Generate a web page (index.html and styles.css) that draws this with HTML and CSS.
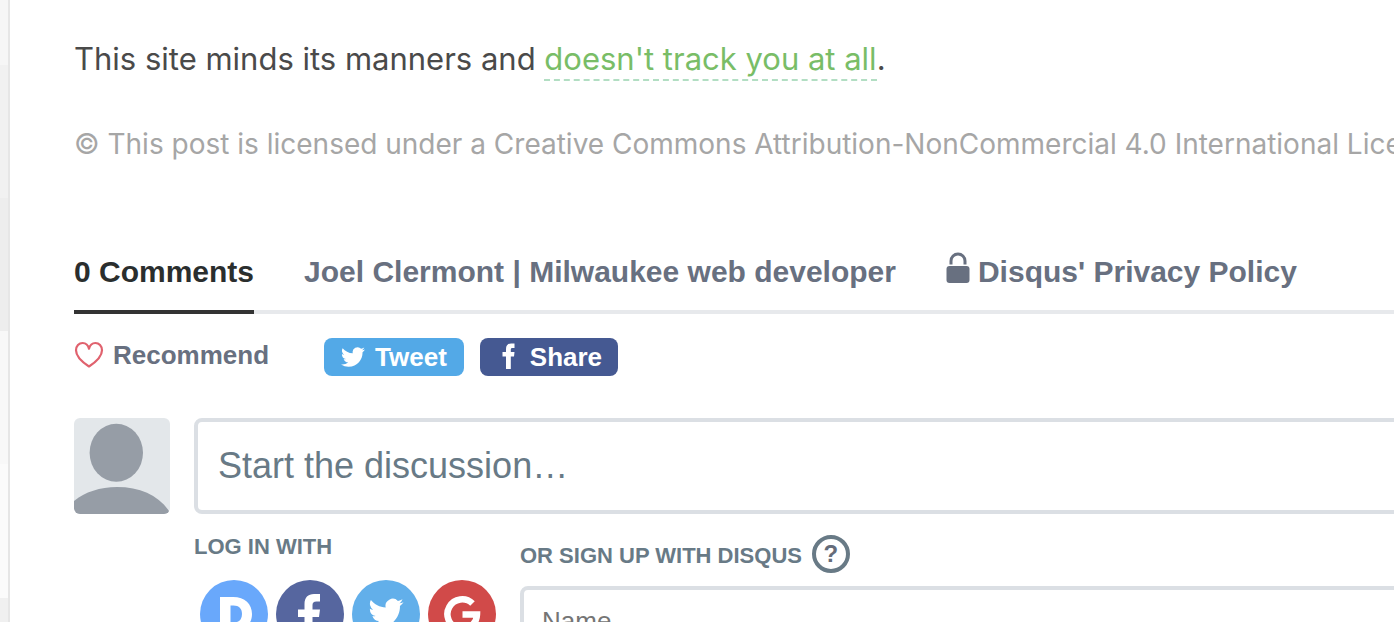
FILE: index.html
```
<!DOCTYPE html>
<html lang="en">
<head>
<meta charset="utf-8">
<title>Comments</title>
<link rel="stylesheet" href="styles.css">
</head>
<body>
<main class="page">
  <p class="note">This site minds its manners and <a class="note-link" href="#">doesn't track you at all</a>.</p>
  <p class="license">© This post is licensed under a Creative Commons Attribution-NonCommercial 4.0 International License</p>

  <section class="thread">
    <nav class="tabs">
      <a class="tab tab-active" href="#">0 Comments</a>
      <a class="tab" href="#">Joel Clermont | Milwaukee web developer</a>
      <a class="tab tab-privacy" href="#">
        <svg class="lock" viewBox="0 0 24 32" aria-hidden="true"><path d="M5 12.500V9a7 7 0 0 1 14 0V12.500" fill="none" stroke="currentColor" stroke-width="3"/><rect x="0.500" y="14" width="23" height="17" rx="3" fill="currentColor"/></svg>
        <span>Disqus' Privacy Policy</span>
      </a>
    </nav>

    <div class="actions">
      <button class="recommend" type="button">
        <svg class="heart" viewBox="0 0 30 28" aria-hidden="true"><path d="M15 25.500C10.500 22.600 2 17 2 9.300C2 5 5 2 8.600 2C11.600 2 14 3.800 15 7.700C16 3.800 18.400 2 21.400 2C25 2 28 5 28 9.300C28 17 19.500 22.600 15 25.500Z" fill="none" stroke="currentColor" stroke-width="2.200" stroke-linejoin="round"/></svg>
        <span>Recommend</span>
      </button>
      <div class="shares">
        <button class="share tweet" type="button">
          <svg class="bird" viewBox="0 0 24 24" aria-hidden="true"><path d="M23.950 4.570a10 10 0 0 1-2.820.770 4.960 4.960 0 0 0 2.160-2.720c-.950.550-2 .950-3.130 1.180a4.920 4.920 0 0 0-8.380 4.480C7.690 8.100 4.070 6.130 1.640 3.160a4.900 4.900 0 0 0 1.520 6.570 4.900 4.900 0 0 1-2.230-.610v.060a4.920 4.920 0 0 0 3.950 4.830 5 5 0 0 1-2.210.080 4.940 4.940 0 0 0 4.600 3.420A9.870 9.870 0 0 1 0 19.540a13.990 13.990 0 0 0 7.550 2.210c9.050 0 14-7.500 14-13.980 0-.210 0-.420-.020-.630a9.940 9.940 0 0 0 2.460-2.550z" fill="currentColor"/></svg>
          <span>Tweet</span>
        </button>
        <button class="share facebook" type="button">
          <svg class="effe" viewBox="0 0 13 26" aria-hidden="true"><path d="M4 25V12.500H0.500V8H4V5C4 1.500 6 -0.500 9.300 -0.500H12.500V4H10.500C9.200 4 8.800 4.600 8.800 5.700V8H12.500L12 12.500H8.800V25Z" fill="currentColor"/></svg>
          <span>Share</span>
        </button>
      </div>
    </div>

    <form class="compose">
      <svg class="avatar" viewBox="0 0 96 96" aria-hidden="true"><rect width="96" height="96" fill="#e3e7ea"/><ellipse cx="42.300" cy="34.800" rx="26.700" ry="29" fill="#969da6"/><path d="M0 83C11 74 26 69 43 69C66 69 84 77 95 93V96H0Z" fill="#969da6"/></svg>
      <div class="fields">
        <textarea class="box message" rows="1" aria-label="Start the discussion" placeholder="Start the discussion…"></textarea>
        <div class="auth">
          <div class="login">
            <h2 class="heading">LOG IN WITH</h2>
            <div class="providers">
              <button class="provider disqus" type="button" aria-label="Disqus">
                <svg viewBox="0 0 68 68" aria-hidden="true"><path d="M20 17H33C45 17 52 24 52 34C52 44 45 51 33 51H20ZM30.500 25.500V42.500H33.500C39 42.500 42 39.500 42 34C42 28.500 39 25.500 33.500 25.500Z" fill="#fff" fill-rule="evenodd"/></svg>
              </button>
              <button class="provider fb" type="button" aria-label="Facebook">
                <svg viewBox="0 0 68 68" aria-hidden="true"><path d="M28.500 52V37H22V29.500H28.500V24C28.500 17.500 32 14 38 14H44V21.500H40.500C37.500 21.500 36.500 23 36.500 25V29.500H44L43 37H36.500V52Z" fill="#fff"/></svg>
              </button>
              <button class="provider tw" type="button" aria-label="Twitter">
                <svg viewBox="0 0 68 68" aria-hidden="true"><path transform="translate(16.500 15.500) scale(1.460)" d="M23.950 4.570a10 10 0 0 1-2.820.770 4.960 4.960 0 0 0 2.160-2.720c-.950.550-2 .950-3.130 1.180a4.920 4.920 0 0 0-8.380 4.480C7.690 8.100 4.070 6.130 1.640 3.160a4.900 4.900 0 0 0 1.520 6.570 4.900 4.900 0 0 1-2.230-.610v.060a4.920 4.920 0 0 0 3.950 4.830 5 5 0 0 1-2.210.080 4.940 4.940 0 0 0 4.600 3.420A9.870 9.870 0 0 1 0 19.540a13.990 13.990 0 0 0 7.550 2.210c9.050 0 14-7.500 14-13.980 0-.210 0-.420-.020-.630a9.940 9.940 0 0 0 2.460-2.550z" fill="#fff"/></svg>
              </button>
              <button class="provider gg" type="button" aria-label="Google">
                <svg viewBox="0 0 68 68" aria-hidden="true"><path d="M44.500 23.500A14.800 14.800 0 1 0 49 34.500H34.500" fill="none" stroke="#fff" stroke-width="6.500"/></svg>
              </button>
            </div>
          </div>
          <div class="signup">
            <div class="signup-head">
              <h2 class="heading">OR SIGN UP WITH DISQUS</h2>
              <button class="help" type="button">?</button>
            </div>
            <input class="box name" type="text" aria-label="Name" placeholder="Name">
          </div>
        </div>
      </div>
    </form>
  </section>
</main>
</body>
</html>
```
FILE: styles.css
```
* {
  box-sizing: border-box;
}

body {
  margin: 0;
  height: 100vh;
  overflow: hidden;
  padding-left: 8px;
  background: linear-gradient(#f6f6f6 65px, #f1f1f1 65px 198px, #ededed 198px 331px, #f8f8f8 331px 464px, #fbfbfb 464px 598px, #f0f0f0 598px);
  font-family: "Liberation Sans", Arial, sans-serif;
}

.page {
  min-height: 100vh;
  padding: 36px 0 0 64px;
  border-left: 2px solid #e6e6e6;
  background: #fff;
}

.note,
.license {
  margin: 0;
  font-family: Inter, "Open Sans", sans-serif;
  white-space: nowrap;
}

.note {
  color: #4a4a4a;
  font-size: 31px;
  line-height: 46px;
}

.note-link {
  padding-bottom: 2px;
  border-bottom: 2px dashed #b2dec3;
  color: #79bd67;
  text-decoration: none;
}

.license {
  margin-top: 40px;
  color: #a6a6a6;
  font-size: 28px;
  line-height: 44px;
}

button,
input,
textarea {
  font-family: inherit;
}

button {
  padding: 0;
  border: 0;
  background: none;
}

svg {
  display: block;
  flex: none;
}

.thread {
  margin-top: 76px;
}

.tabs {
  display: flex;
  gap: 50px;
  box-shadow: inset 0 -4px #e7e9ec;
  white-space: nowrap;
}

.tab {
  padding: 10px 0 18px;
  border-bottom: 4px solid transparent;
  color: #687080;
  font-size: 30px;
  font-weight: bold;
  line-height: 40px;
  text-decoration: none;
}

.tab-active {
  border-color: #333;
  color: #2a2e2e;
}

.tab-privacy {
  display: flex;
  gap: 8px;
}

.lock {
  width: 24px;
  height: 32px;
}

.actions {
  display: flex;
  align-items: center;
  gap: 55px;
  margin-top: 24px;
  font-size: 26px;
}

.recommend,
.share {
  display: flex;
  align-items: center;
  font-size: 26px;
  font-weight: bold;
  line-height: 30px;
}

.recommend {
  gap: 9px;
  padding-bottom: 4px;
  color: #687080;
}

.heart {
  width: 30px;
  height: 28px;
  color: #e0626e;
}

.shares {
  display: flex;
  gap: 16px;
}

.share {
  height: 38px;
  border-radius: 8px;
  color: #fff;
}

.tweet {
  gap: 10px;
  padding: 0 17px;
  background: #53a9e7;
}

.facebook {
  gap: 15px;
  padding: 0 16px 0 22px;
  background: #455992;
}

.bird {
  width: 24px;
  height: 26px;
}

.effe {
  width: 13px;
  height: 26px;
  overflow: visible;
}

.compose {
  display: flex;
  gap: 24px;
  margin-top: 42px;
}

.avatar {
  width: 96px;
  height: 96px;
  border-radius: 6px;
}

.fields {
  flex: 1;
  margin-right: -8px;
}

.box {
  display: block;
  width: 100%;
  border: 4px solid #dbdfe4;
  border-radius: 8px;
  background: #fff;
}

.message {
  height: 96px;
  padding: 22px 20px;
  font-size: 36px;
  line-height: 44px;
  resize: none;
  overflow: hidden;
}

.message::placeholder {
  color: #687a86;
}

.name {
  height: 70px;
  padding: 0 18px;
  font-size: 26px;
}

.name::placeholder {
  color: #757575;
}

.auth {
  display: flex;
  gap: 24px;
}

.login {
  padding-top: 20px;
}

.heading {
  margin: 0;
  color: #687a86;
  font-size: 22px;
  line-height: 26px;
  white-space: nowrap;
}

.providers {
  display: flex;
  gap: 8px;
  margin-top: 20px;
  padding-left: 6px;
}

.provider {
  width: 68px;
  height: 68px;
  border-radius: 50%;
}

.disqus {
  background: #69a8fb;
}

.fb {
  background: #56669f;
}

.tw {
  background: #62afea;
}

.gg {
  background: #d14a49;
}

.signup {
  flex: 1;
  padding-top: 21px;
}

.signup-head {
  display: flex;
  align-items: center;
  gap: 10px;
  margin-bottom: 13px;
}

.signup-head .heading {
  padding-top: 4px;
}

.help {
  width: 38px;
  height: 38px;
  border: 4px solid #687a86;
  border-radius: 50%;
  color: #656c7a;
  font-size: 24px;
  font-weight: bold;
  line-height: 30px;
}
```
